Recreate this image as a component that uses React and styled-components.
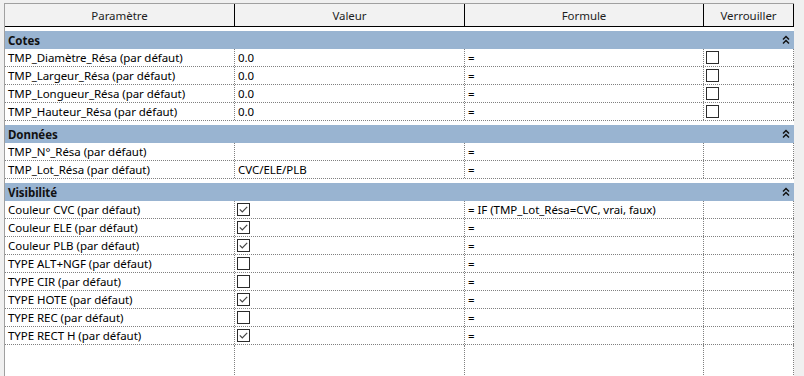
import React from 'react';
import styled, { createGlobalStyle } from 'styled-components';

const GlobalStyle = createGlobalStyle`
  html, body {
    margin: 0;
    padding: 0;
    background: #f0f0f0;
  }
  body {
    font-family: 'Segoe UI', 'Noto Sans', 'Liberation Sans', sans-serif;
    font-size: 11.5px;
    letter-spacing: -0.05px;
    color: #000;
  }
`;

const COLS = '230px 230px 239px 90px';

const Frame = styled.div`
  height: 376px;
  padding: 3px 10px 0 4px;
  box-sizing: border-box;
  overflow: hidden;
`;

const Table = styled.div`
  height: 100%;
  display: flex;
  flex-direction: column;
  background: #fff;
  border-left: 1px solid #a0a0a0;
  border-top: 1px solid #a0a0a0;
`;

const HeaderRow = styled.div`
  display: grid;
  grid-template-columns: ${COLS};
  height: 22px;
  background: #f2f2f2;
  border-bottom: 1px solid #000;
`;

const HeaderCell = styled.div`
  display: flex;
  align-items: center;
  justify-content: center;
  border-right: 1px solid #000;
  color: #1e1e1e;
`;

const GroupBar = styled.div`
  margin-top: 4px;
  height: 18px;
  display: flex;
  align-items: center;
  justify-content: space-between;
  padding: 0 4px 0 3px;
  background: #99b4d1;
  font-weight: bold;
  color: #111;
  width: 789px;
  box-sizing: border-box;
`;

const Row = styled.div`
  display: grid;
  grid-template-columns: ${COLS};
  height: 18px;
  border-bottom: 1px dotted #808080;
  box-sizing: border-box;
`;

const Cell = styled.div`
  display: flex;
  align-items: center;
  padding-left: ${(p) => (p.$box ? '2px' : '3px')};
  border-right: 1px dotted #808080;
  white-space: nowrap;
  overflow: hidden;
`;

const Filler = styled.div`
  flex: 1;
  display: grid;
  grid-template-columns: ${COLS};
`;

const FillerCell = styled.div`
  border-right: 1px dotted #808080;
`;

const Box = styled.span`
  width: 11px;
  height: 11px;
  border: 1px solid #2b2b2b;
  background: #fff;
  display: inline-flex;
  align-items: center;
  justify-content: center;
`;

function Check({ on }) {
  return (
    <Box>
      {on && (
        <svg width="11" height="11" viewBox="0 0 11 11">
          <path d="M1.8 5.3 L4.3 7.8 L9.2 2.9" fill="none" stroke="#444" strokeWidth="1.2" />
        </svg>
      )}
    </Box>
  );
}

function Collapse() {
  return (
    <svg width="8" height="10" viewBox="0 0 8 10">
      <path d="M1 4.5 L4 1.5 L7 4.5 M1 8.5 L4 5.5 L7 8.5" fill="none" stroke="#111" strokeWidth="1.5" />
    </svg>
  );
}

const groups = [
  {
    name: 'Cotes',
    rows: [
      { p: 'TMP_Diamètre_Résa (par défaut)', v: '0.0', f: '=', lock: true },
      { p: 'TMP_Largeur_Résa (par défaut)', v: '0.0', f: '=', lock: true },
      { p: 'TMP_Longueur_Résa (par défaut)', v: '0.0', f: '=', lock: true },
      { p: 'TMP_Hauteur_Résa (par défaut)', v: '0.0', f: '=', lock: true },
    ],
  },
  {
    name: 'Données',
    rows: [
      { p: 'TMP_N°_Résa (par défaut)', v: '', f: '=' },
      { p: 'TMP_Lot_Résa (par défaut)', v: 'CVC/ELE/PLB', f: '=' },
    ],
  },
  {
    name: 'Visibilité',
    rows: [
      { p: 'Couleur CVC (par défaut)', check: true, f: '= IF (TMP_Lot_Résa=CVC, vrai, faux)' },
      { p: 'Couleur ELE (par défaut)', check: true, f: '=' },
      { p: 'Couleur PLB (par défaut)', check: true, f: '=' },
      { p: 'TYPE ALT+NGF (par défaut)', check: false, f: '=' },
      { p: 'TYPE CIR (par défaut)', check: false, f: '=' },
      { p: 'TYPE HOTE (par défaut)', check: true, f: '=' },
      { p: 'TYPE REC (par défaut)', check: false, f: '=' },
      { p: 'TYPE RECT H (par défaut)', check: true, f: '=' },
    ],
  },
];

export default function App() {
  return (
    <>
      <GlobalStyle />
      <Frame>
        <Table>
          <HeaderRow>
            <HeaderCell>Paramètre</HeaderCell>
            <HeaderCell>Valeur</HeaderCell>
            <HeaderCell>Formule</HeaderCell>
            <HeaderCell>Verrouiller</HeaderCell>
          </HeaderRow>

          {groups.map((g) => (
            <React.Fragment key={g.name}>
              <GroupBar>
                <span>{g.name}</span>
                <Collapse />
              </GroupBar>
              {g.rows.map((r) => (
                <Row key={r.p}>
                  <Cell>{r.p}</Cell>
                  {'check' in r ? (
                    <Cell $box>
                      <Check on={r.check} />
                    </Cell>
                  ) : (
                    <Cell>{r.v}</Cell>
                  )}
                  <Cell>{r.f}</Cell>
                  <Cell $box>{r.lock && <Check on={false} />}</Cell>
                </Row>
              ))}
            </React.Fragment>
          ))}

          <Filler>
            <FillerCell />
            <FillerCell />
            <FillerCell />
            <FillerCell />
          </Filler>
        </Table>
      </Frame>
    </>
  );
}
